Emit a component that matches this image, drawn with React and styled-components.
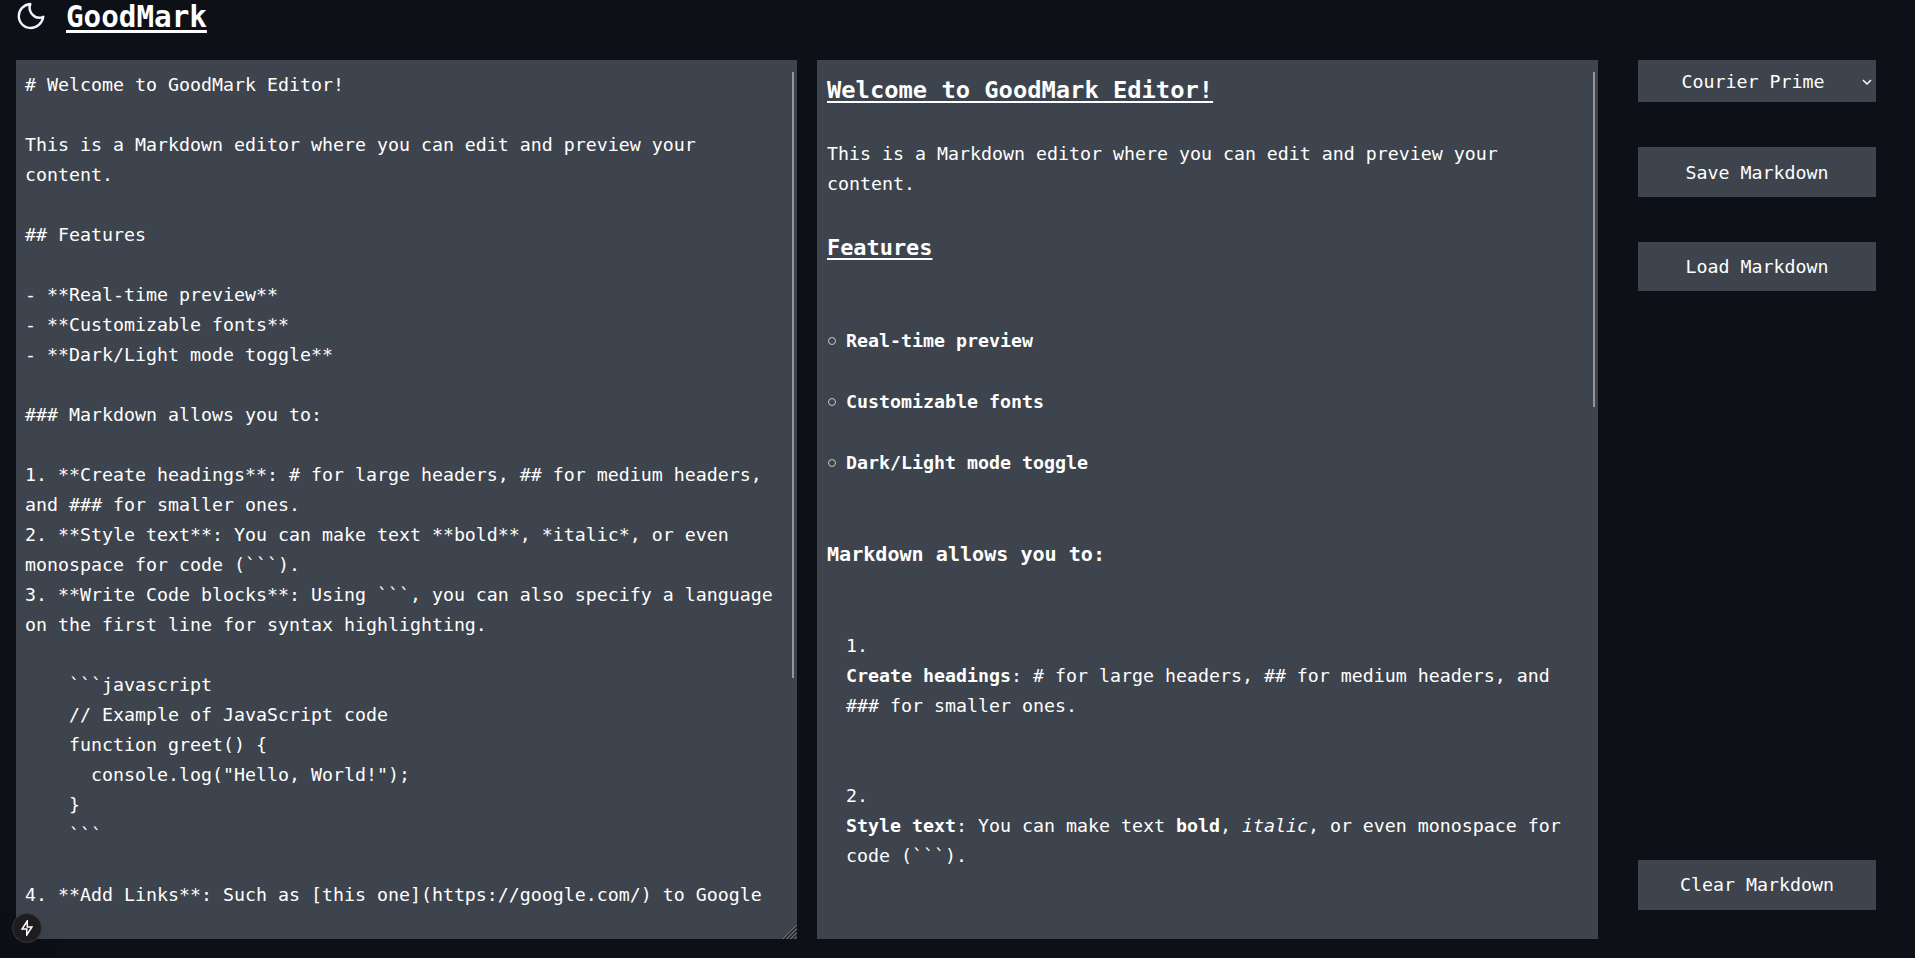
import React from "react";
import styled, { createGlobalStyle } from "styled-components";

const mono = `Consolas, "DejaVu Sans Mono", monospace`;

const GlobalStyle = createGlobalStyle`
  *, *::before, *::after { box-sizing: border-box; }
  html, body, #root { height: 100%; }
  body {
    margin: 0;
    background: #0d1117;
    color: #fff;
    font-family: ${mono};
    font-size: 18.27px;
    line-height: 30px;
    overflow: hidden;
  }
  h1, h2, h3, p, ul, ol { margin: 0; padding: 0; font-weight: inherit; }
`;

const Page = styled.div`
  height: 958px;
  display: flex;
  flex-direction: column;
`;

const Header = styled.header`
  height: 60px;
  display: flex;
  align-items: flex-start;
  gap: 20px;
  padding-left: 16px;
`;

const ThemeButton = styled.button`
  width: 30px;
  height: 32px;
  padding: 0;
  border: 0;
  background: none;
  color: #f1f5ff;
  svg { display: block; }
`;

const Title = styled.h1`
  && { font-weight: 700; }
  font-size: 29.25px;
  line-height: 34px;
  text-decoration: underline;
  text-decoration-thickness: 3px;
  text-underline-offset: 3px;
`;

const Main = styled.main`
  display: flex;
  height: 879px;
  padding-left: 16px;
`;

const Pane = styled.section`
  display: flex;
  width: 781px;
  margin-right: 20px;
  padding: ${(p) => p.$top || 10}px 10px 10px ${(p) => p.$left || 10}px;
  background: #3e444d;
  overflow: hidden;
  position: relative;
`;

const Source = styled.div`
  width: 755px;
  white-space: pre-wrap;
`;

const Thumb = styled.div`
  position: absolute;
  top: 12px;
  right: 3px;
  width: 2px;
  height: ${(p) => p.$length}px;
  background: #999691;
`;

const Grip = styled.svg`
  position: absolute;
  right: 0;
  bottom: 0;
`;

const Preview = styled.article`
  width: 740px;
`;

const Heading = styled.h2`
  && { font-weight: 700; }
  font-size: ${(p) => p.$size}px;
  line-height: ${(p) => p.$line}px;
  margin-bottom: ${(p) => p.$after}px;
  text-decoration: ${(p) => (p.$plain ? "none" : "underline")};
  text-decoration-thickness: 2px;
  text-underline-offset: 3px;
`;

const Paragraph = styled.p`
  margin-bottom: ${(p) => p.$after}px;
`;

const BulletList = styled.ul`
  list-style: none;
  display: flex;
  flex-direction: column;
  gap: 31px;
  margin-bottom: 60px;
`;

const Bullet = styled.li`
  display: flex;
  align-items: center;
  height: 30px;
  font-weight: 700;
  &::before {
    content: "";
    width: 8px;
    height: 8px;
    margin: 0 10px 0 1px;
    border: 1px solid #c4c7ca;
    border-radius: 50%;
  }
`;

const Steps = styled.ol`
  list-style: none;
  && { padding-left: 19px; }
`;

const Step = styled.li`
  margin-bottom: 60px;
`;

const Sidebar = styled.aside`
  display: flex;
  flex-direction: column;
  width: 238px;
  margin-left: 20px;
  padding-bottom: 29px;
`;

const Action = styled.button`
  height: ${(p) => p.$height || 50}px;
  margin-bottom: ${(p) => p.$after || 0}px;
  margin-top: ${(p) => (p.$last ? "auto" : 0)};
  padding: ${(p) => p.$nudge || 0}px 0 0;
  border: 0;
  background: #3e444d;
  color: #fff;
  font: inherit;
`;

const FontPicker = styled.button`
  display: flex;
  align-items: center;
  height: 42px;
  margin-bottom: 45px;
  padding: 1px 4px 0 6px;
  border: 0;
  background: #3e444d;
  color: #fff;
  font: inherit;
  span { flex: 1; }
`;

const Badge = styled.div`
  position: fixed;
  left: 12px;
  top: 913px;
  width: 30px;
  height: 30px;
  border-radius: 50%;
  display: flex;
  align-items: center;
  justify-content: center;
  background: #1d1d1f;
  border: 1px solid #38393b;
  box-shadow: 0 8px 24px rgba(0, 0, 0, 0.14);
`;

const source = `# Welcome to GoodMark Editor!

This is a Markdown editor where you can edit and preview your
content.

## Features

- **Real-time preview**
- **Customizable fonts**
- **Dark/Light mode toggle**

### Markdown allows you to:

1. **Create headings**: # for large headers, ## for medium headers,
and ### for smaller ones.
2. **Style text**: You can make text **bold**, *italic*, or even
monospace for code (\`\`\`).
3. **Write Code blocks**: Using \`\`\`, you can also specify a language
on the first line for syntax highlighting.

    \`\`\`javascript
    // Example of JavaScript code
    function greet() {
      console.log("Hello, World!");
    }
    \`\`\`

4. **Add Links**: Such as [this one](https://google.com/) to Google`;

export default function App() {
  return (
    <Page>
      <GlobalStyle />
      <Header>
        <ThemeButton aria-label="Toggle theme">
          <svg width="30" height="32" viewBox="0 0 30 32" fill="none" stroke="currentColor" strokeWidth="2.4" strokeLinejoin="round" strokeLinecap="round">
            <path d="M14.300 4 C11.500 11.500 18.500 20.500 27.300 16.800 C26 23.500 20.800 28 14.700 28 C8 28 2.800 22.700 2.800 16 C2.800 9.800 7.500 4.700 14.300 4 Z" />
          </svg>
        </ThemeButton>
        <Title>GoodMark</Title>
      </Header>
      <Main>
        <Pane $left={9}>
          <Source>{source}</Source>
          <Thumb $length={606} />
          <Grip width="16" height="16" viewBox="0 0 16 16">
            <path d="M0 16 16 0V16Z" fill="#24282d" />
            <path d="M1.500 16 16 1.500M5.500 16 16 5.500M9.500 16 16 9.500M13.500 16 16 13.500" stroke="#a9abad" strokeWidth="0.9" />
          </Grip>
        </Pane>
        <Pane $top={11}>
          <Preview>
            <Heading $size={23.75} $line={39} $after={29}>Welcome to GoodMark Editor!</Heading>
            <Paragraph $after={31}>This is a Markdown editor where you can edit and preview your content.</Paragraph>
            <Heading $size={21.9} $line={36} $after={60}>Features</Heading>
            <BulletList>
              <Bullet>Real-time preview</Bullet>
              <Bullet>Customizable fonts</Bullet>
              <Bullet>Dark/Light mode toggle</Bullet>
            </BulletList>
            <Heading as="h3" $size={20.08} $line={33} $after={60} $plain>Markdown allows you to:</Heading>
            <Steps>
              <Step>
                1.<br />
                <strong>Create headings</strong>: # for large headers, ## for medium headers, and ### for smaller ones.
              </Step>
              <Step>
                2.<br />
                <strong>Style text</strong>: You can make text <strong>bold</strong>, <em>italic</em>, or even monospace for code (```).
              </Step>
            </Steps>
          </Preview>
          <Thumb $length={335} />
        </Pane>
        <Sidebar>
          <FontPicker>
            <span>Courier Prime</span>
            <svg width="10" height="10" viewBox="0 0 10 10" fill="none" stroke="currentColor" strokeWidth="1.500">
              <path d="M1 3 5 7 9 3" />
            </svg>
          </FontPicker>
          <Action $after={45} $nudge={2}>Save Markdown</Action>
          <Action $height={49}>Load Markdown</Action>
          <Action $last>Clear Markdown</Action>
        </Sidebar>
      </Main>
      <Badge>
        <svg width="16" height="16" viewBox="0 0 16 16" fill="none" stroke="#fff" strokeWidth="1.500" strokeLinejoin="miter">
          <path d="M8.250 1 3.100 9.040H7.750V15L12.900 6.960H8.250Z" />
        </svg>
      </Badge>
    </Page>
  );
}
